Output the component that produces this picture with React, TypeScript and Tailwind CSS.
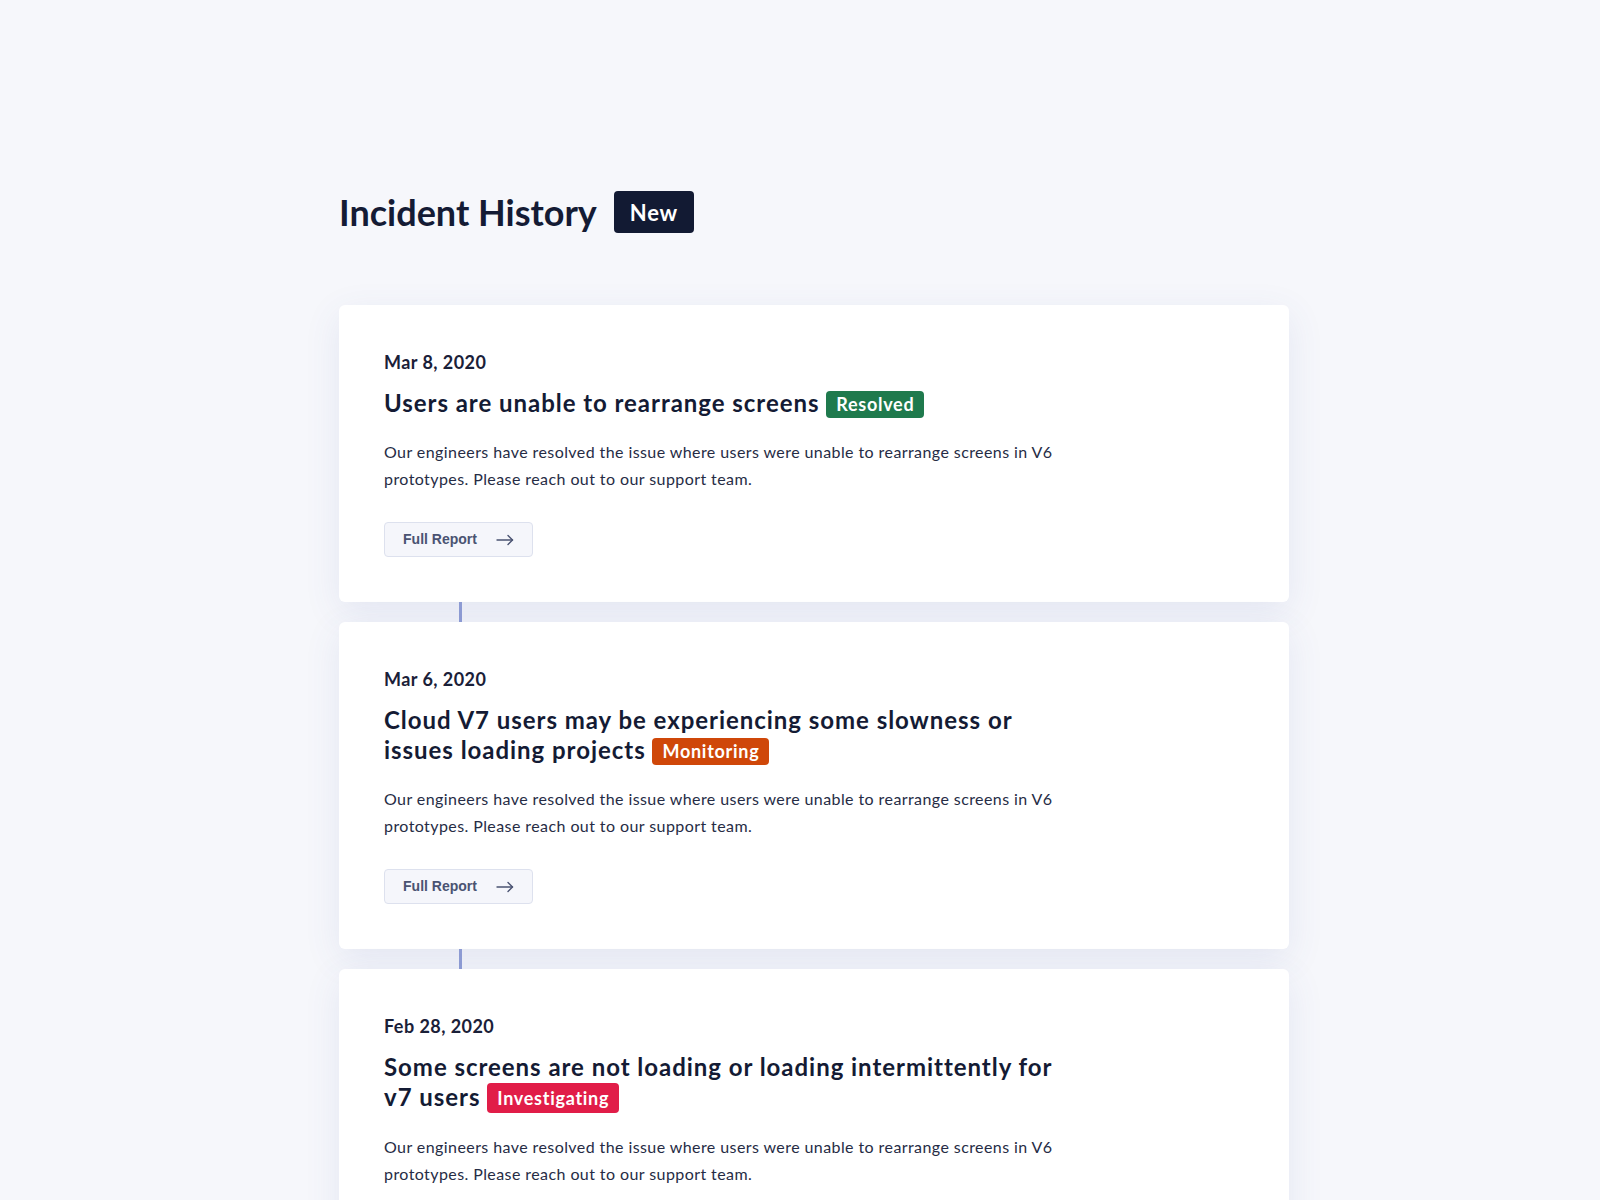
import React from "react";

type Incident = {
  date: string;
  title: string;
  status: string;
  statusClass: string;
};

const incidents: Incident[] = [
  {
    date: "Mar 8, 2020",
    title: "Users are unable to rearrange screens",
    status: "Resolved",
    statusClass: "bg-[#1f7a4d] h-[27px]",
  },
  {
    date: "Mar 6, 2020",
    title: "Cloud V7 users may be experiencing some slowness or issues loading projects",
    status: "Monitoring",
    statusClass: "bg-[#cf4709] h-[27px]",
  },
  {
    date: "Feb 28, 2020",
    title: "Some screens are not loading or loading intermittently for v7 users",
    status: "Investigating",
    statusClass: "bg-[#e11d48] h-[30px]",
  },
];

const body =
  "Our engineers have resolved the issue where users were unable to rearrange screens in V6 prototypes. Please reach out to our support team.";

const Arrow = () => (
  <svg width="18" height="12" viewBox="0 0 18 12" fill="none" stroke="#4a5372" strokeWidth="1.4" strokeLinecap="round" strokeLinejoin="round">
    <path d="M1 6h15.5" />
    <path d="M12 1.5 16.5 6 12 10.5" />
  </svg>
);

const IncidentCard = ({ item }: { item: Incident }) => (
  <div className="bg-white rounded-md shadow-[0_10px_36px_rgba(70,90,170,0.10)] pt-11 pb-[45px] px-[45px]">
    <div className="text-[18px] leading-[26px] font-bold tracking-[0.025em] text-[#1a2038]">{item.date}</div>
    <h2 className="mt-[13px] max-w-[680px] text-[24px] leading-[30px] font-bold tracking-[0.04em] text-[#141b34]">
      {item.title}{" "}
      <span
        className={`inline-flex items-center align-middle -mt-[3px] px-[10px] rounded text-white text-[18px] font-bold tracking-[0.04em] leading-none ${item.statusClass}`}
      >
        {item.status}
      </span>
    </h2>
    <p className="mt-5 max-w-[680px] text-[16px] leading-[27px] tracking-[0.026em] text-[#262c45]">{body}</p>
    <button className="mt-[30px] h-[35px] w-[149px] flex items-center justify-center gap-[19px] rounded border border-[#dde1ee] bg-[#f5f6fb] font-['Liberation_Sans',sans-serif] text-[14px] font-bold text-[#4a5372]">
      Full Report
      <Arrow />
    </button>
  </div>
);

export default function App() {
  return (
    <div className="min-h-screen bg-[#f6f7fb] font-['Lato',sans-serif] pt-[190px] pb-20">
      <div className="ml-[339px] w-[950px]">
        <div className="flex items-center gap-[17px] h-[44px]">
          <h1 className="text-[36px] font-bold text-[#141b34] leading-none">Incident History</h1>
          <span className="inline-flex items-center h-[42px] px-[16px] rounded bg-[#121a33] text-white text-[22px] font-bold tracking-[0.03em]">
            New
          </span>
        </div>
        <div className="mt-[71px] flex flex-col">
          {incidents.map((item, i) => (
            <div key={i} className="flex flex-col">
              {i > 0 && <div className="ml-[120px] w-[3px] h-[20px] bg-[#8e9cd4]" />}
              <IncidentCard item={item} />
            </div>
          ))}
        </div>
      </div>
    </div>
  );
}
